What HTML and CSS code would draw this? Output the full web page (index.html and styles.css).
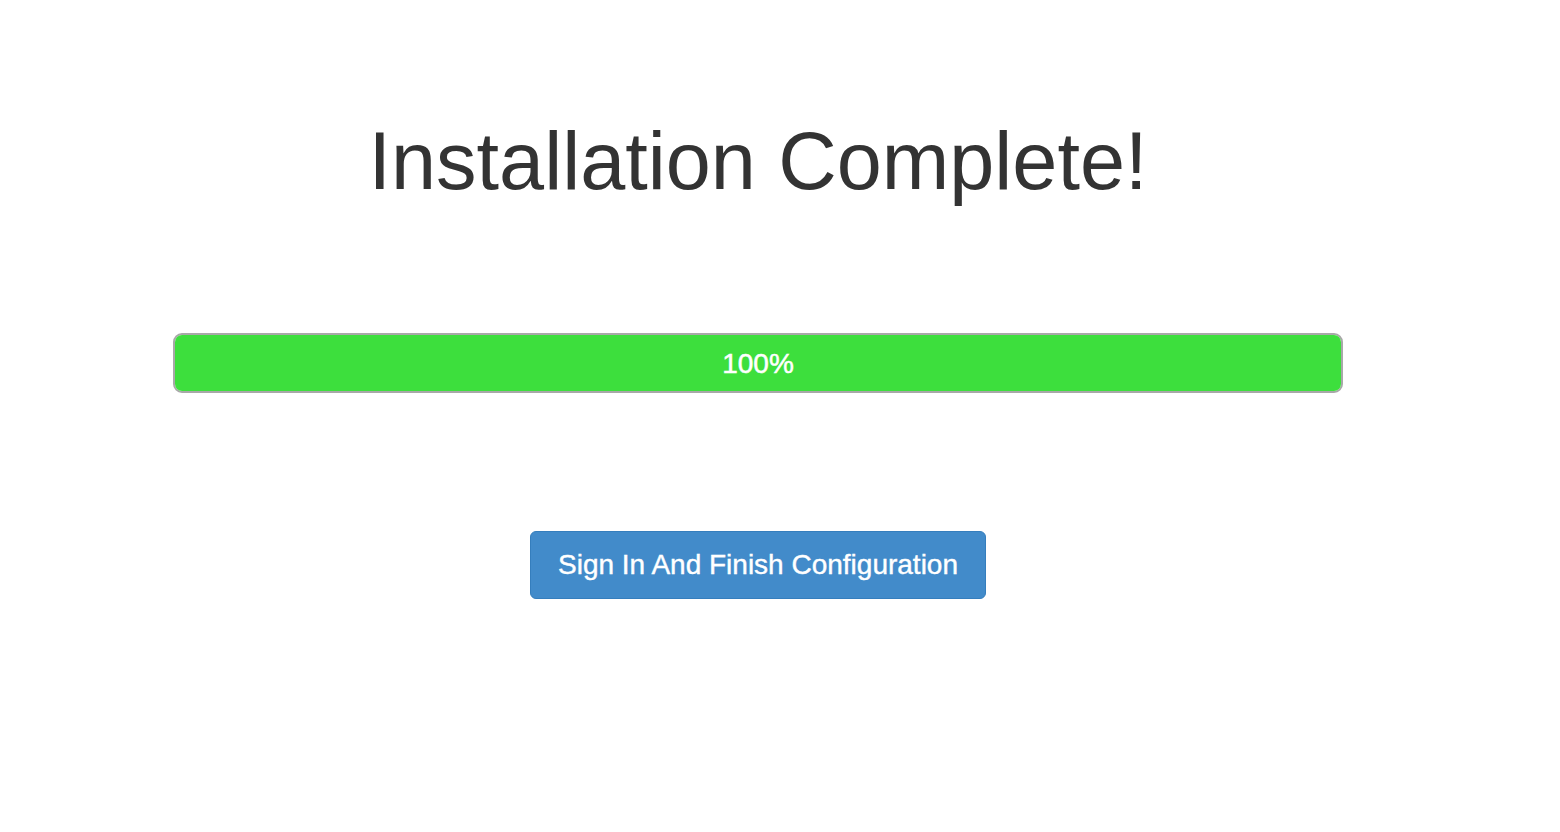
FILE: index.html
```html
<!DOCTYPE html>
<html>
<head>
<meta charset="utf-8">
<link rel="stylesheet" href="styles.css">
</head>
<body>
<div class="page">
  <div class="container">
    <h1 class="title">Installation Complete!</h1>
    <div class="progress">
      <div class="progress-bar" style="width:100%">100%</div>
    </div>
    <div class="actions">
      <button class="btn">Sign In And Finish Configuration</button>
    </div>
  </div>
</div>
</body>
</html>
```
FILE: styles.css
```css
html, body {
  margin: 0;
  padding: 0;
  background: #fff;
}
body {
  font-family: "Liberation Sans", Arial, sans-serif;
  color: #333;
}
.page {
  width: 1516px;
}
.container {
  width: 1170px;
  margin: 0 auto;
  padding-top: 115px;
}
.title {
  margin: 0;
  font-size: 81px;
  line-height: 92px;
  font-weight: normal;
  text-align: center;
  color: #333;
}
.progress {
  margin-top: 126px;
  height: 60px;
  box-sizing: border-box;
  border: 2px solid #a8a8a8;
  border-radius: 9px;
  background: #eee;
  overflow: hidden;
  display: flex;
}
.progress-bar {
  background: #3ddf3d;
  color: #fff;
  font-size: 28px;
  -webkit-text-stroke: 0.5px #fff;
  padding-top: 2px;
  box-sizing: border-box;
  display: flex;
  align-items: center;
  justify-content: center;
}
.actions {
  margin-top: 138px;
  display: flex;
  justify-content: center;
}
.btn {
  font-family: "Liberation Sans", Arial, sans-serif;
  font-size: 28px;
  -webkit-text-stroke: 0.4px #fff;
  color: #fff;
  background: #428bca;
  border: 1px solid #357ebd;
  border-radius: 6px;
  height: 68px;
  padding: 0 26.5px;
  cursor: pointer;
}
```
